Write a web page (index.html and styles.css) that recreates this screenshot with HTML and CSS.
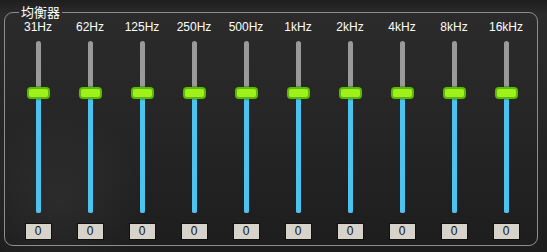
FILE: index.html
```html
<!DOCTYPE html>
<html lang="zh">
<head>
    <meta charset="UTF-8">
    <title>均衡器</title>
    <link rel="stylesheet" href="styles.css">
</head>
<body>
    <fieldset class="eq">
        <legend>均衡器</legend>
        <div class="bands">
            <div class="band"><span class="freq">31Hz</span><div class="track"><div class="fill" style="height: 120px;"></div><div class="thumb" style="bottom: 114px;"></div></div><div class="value">0</div></div>
            <div class="band"><span class="freq">62Hz</span><div class="track"><div class="fill" style="height: 120px;"></div><div class="thumb" style="bottom: 114px;"></div></div><div class="value">0</div></div>
            <div class="band"><span class="freq">125Hz</span><div class="track"><div class="fill" style="height: 120px;"></div><div class="thumb" style="bottom: 114px;"></div></div><div class="value">0</div></div>
            <div class="band"><span class="freq">250Hz</span><div class="track"><div class="fill" style="height: 120px;"></div><div class="thumb" style="bottom: 114px;"></div></div><div class="value">0</div></div>
            <div class="band"><span class="freq">500Hz</span><div class="track"><div class="fill" style="height: 120px;"></div><div class="thumb" style="bottom: 114px;"></div></div><div class="value">0</div></div>
            <div class="band"><span class="freq">1kHz</span><div class="track"><div class="fill" style="height: 120px;"></div><div class="thumb" style="bottom: 114px;"></div></div><div class="value">0</div></div>
            <div class="band"><span class="freq">2kHz</span><div class="track"><div class="fill" style="height: 120px;"></div><div class="thumb" style="bottom: 114px;"></div></div><div class="value">0</div></div>
            <div class="band"><span class="freq">4kHz</span><div class="track"><div class="fill" style="height: 120px;"></div><div class="thumb" style="bottom: 114px;"></div></div><div class="value">0</div></div>
            <div class="band"><span class="freq">8kHz</span><div class="track"><div class="fill" style="height: 120px;"></div><div class="thumb" style="bottom: 114px;"></div></div><div class="value">0</div></div>
            <div class="band"><span class="freq">16kHz</span><div class="track"><div class="fill" style="height: 120px;"></div><div class="thumb" style="bottom: 114px;"></div></div><div class="value">0</div></div>
        </div>
    </fieldset>
</body>
</html>
```

FILE: styles.css
```css
body {
    margin: 0;
    width: 547px;
    height: 252px;
    overflow: hidden;
    font-family: "Liberation Sans", Arial, sans-serif;
    background-color: #222;
    background-image:
        radial-gradient(circle at 60px 200px, rgba(255, 255, 255, 0.05) 0, rgba(255, 255, 255, 0) 90px),
        linear-gradient(to bottom, #1e1e1e 0, #2b2b2b 14px, #262626 120px, #1d1d1d 252px);
}

.eq {
    box-sizing: border-box;
    margin: 3px 0 0 4px;
    padding: 0 0 0 7px;
    width: 534px;
    height: 243px;
    border: 1px solid #8e8e8e;
    border-radius: 9px;
}

.eq legend {
    margin-left: 7px;
    padding: 0 2px;
    color: #fff;
    font-family: "Noto Sans CJK SC", sans-serif;
    font-size: 13px;
    line-height: 18px;
}

.bands {
    display: grid;
    grid-template-columns: repeat(10, 52px);
    margin-top: -1px;
}

.band {
    display: flex;
    flex-direction: column;
    align-items: center;
}

.freq {
    color: #fff;
    font-size: 12px;
    line-height: 14px;
    height: 14px;
}

.track {
    position: relative;
    width: 5px;
    height: 172px;
    margin-top: 7px;
    border-radius: 3px;
    background-color: #9a9a9a;
}

.fill {
    position: absolute;
    left: 0;
    bottom: 0;
    width: 5px;
    border-radius: 0 0 3px 3px;
    background-color: #4cc3ef;
}

.thumb {
    position: absolute;
    left: -9px;
    width: 19px;
    height: 8px;
    border: 2px solid #5cb80c;
    border-radius: 4px;
    background-color: #9ef21a;
    box-shadow: 0 0 2px #243d06;
}

.value {
    box-sizing: border-box;
    width: 27px;
    height: 17px;
    margin-top: 10px;
    border: 1px solid #111;
    background-color: #d7d3cb;
    color: #111;
    font-size: 12px;
    line-height: 15px;
    text-align: center;
}
```
